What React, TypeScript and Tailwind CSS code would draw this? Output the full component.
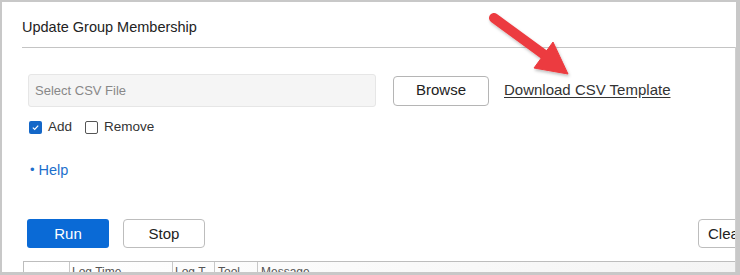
import React from 'react';

const font = { fontFamily: '"Liberation Sans", Arial, sans-serif' };

function Checkbox({ checked, label }: { checked: boolean; label: string }) {
  return (
    <label className="flex items-center gap-[6px] text-[13.5px] text-[#333]">
      {checked ? (
        <span className="flex h-[13px] w-[13px] items-center justify-center rounded-[2px] bg-[#1467c8]">
          <svg width="9" height="9" viewBox="0 0 9 9" fill="none">
            <path d="M1.8 4.6 L3.7 6.4 L7.2 2.6" stroke="white" strokeWidth="1.2" />
          </svg>
        </span>
      ) : (
        <span className="h-[13px] w-[13px] rounded-[2px] border border-[#555] bg-white" />
      )}
      {label}
    </label>
  );
}

function Arrow() {
  return (
    <svg className="pointer-events-none absolute left-0 top-0" width="740" height="275">
      <defs>
        <filter id="sh" x="-20%" y="-20%" width="140%" height="140%">
          <feDropShadow dx="1" dy="2" stdDeviation="1.5" floodColor="#000" floodOpacity="0.25" />
        </filter>
      </defs>
      <g filter="url(#sh)" fill="#ec3b3f" stroke="#ec3b3f">
        <line x1="494" y1="18" x2="546" y2="56" strokeWidth="10" strokeLinecap="round" />
        <polygon points="534,68 553,42 568,74" strokeWidth="1" strokeLinejoin="round" />
      </g>
    </svg>
  );
}

export default function App() {
  return (
    <div className="relative h-[275px] w-[740px] overflow-hidden bg-[#c8c8c8]" style={font}>
      <div className="ml-[2px] mt-[2px] flex h-[270px] w-[734px] flex-col overflow-hidden bg-white">
        <div className="h-[4px] bg-[#f4f4f4]" />
        <div className="ml-5 border-b border-[#c4c4c4] pb-[10px] pt-[15px] text-[14.5px] leading-5 text-[#222]">
          Update Group Membership
        </div>

        <div className="ml-[26px] mt-[26px] flex items-center">
          <div className="flex h-[33px] w-[348px] items-center rounded-[3px] border border-[#e6e6e6] bg-[#f5f5f5] px-[6px] text-[13px] text-[#888]">
            Select CSV File
          </div>
          <button className="ml-[17px] h-[30px] w-[96px] rounded-[4px] border border-[#b5b5b5] bg-white text-[15px] text-[#222]">
            Browse
          </button>
          <a className="ml-[15px] text-[15px] text-[#333] underline underline-offset-2">Download CSV Template</a>
        </div>

        <div className="ml-[27px] mt-[10px] flex items-center gap-[13px]">
          <Checkbox checked label="Add" />
          <Checkbox checked={false} label="Remove" />
        </div>

        <div className="ml-[28px] mt-[23px] flex items-center text-[14.5px] leading-5 text-[#1d6fcc]">
          <span className="mr-[4px] text-[13px]">•</span>
          Help
        </div>

        <div className="ml-[25px] mt-[39px] flex items-center">
          <button className="h-[29px] w-[82px] rounded-[3px] bg-[#0a6ad6] text-[15px] text-white">Run</button>
          <button className="ml-[14px] h-[29px] w-[82px] rounded-[4px] border border-[#bdbdbd] bg-white text-[15px] text-[#222]">
            Stop
          </button>
          <button className="-mr-[44px] ml-auto h-[29px] w-[82px] shrink-0 rounded-[4px] border border-[#bdbdbd] bg-white pl-[9px] text-left text-[15px] text-[#222]">
            Clear
          </button>
        </div>

        <div className="ml-[21px] mt-[13px] flex h-[12px] border-l border-t border-[#bdbdbd] bg-gradient-to-r from-white to-[#f4f4f4] text-[12px] leading-4 text-[#555]">
          <div className="w-[46px] border-r border-[#c8c8c8]" />
          <div className="w-[103px] overflow-hidden whitespace-nowrap border-r border-[#c8c8c8] pl-[2px] pt-[2px]">Log Time</div>
          <div className="w-[42px] overflow-hidden whitespace-nowrap border-r border-[#c8c8c8] pl-[2px] pt-[2px]">Log T...</div>
          <div className="w-[43px] overflow-hidden whitespace-nowrap border-r border-[#c8c8c8] pl-[3px] pt-[2px]">Tool</div>
          <div className="flex-1 whitespace-nowrap pl-[3px] pt-[2px]">Message</div>
        </div>
      </div>
      <div className="absolute right-[4px] top-[47px] h-[225px] w-px bg-[#d0d0d0]" />
      <Arrow />
    </div>
  );
}
